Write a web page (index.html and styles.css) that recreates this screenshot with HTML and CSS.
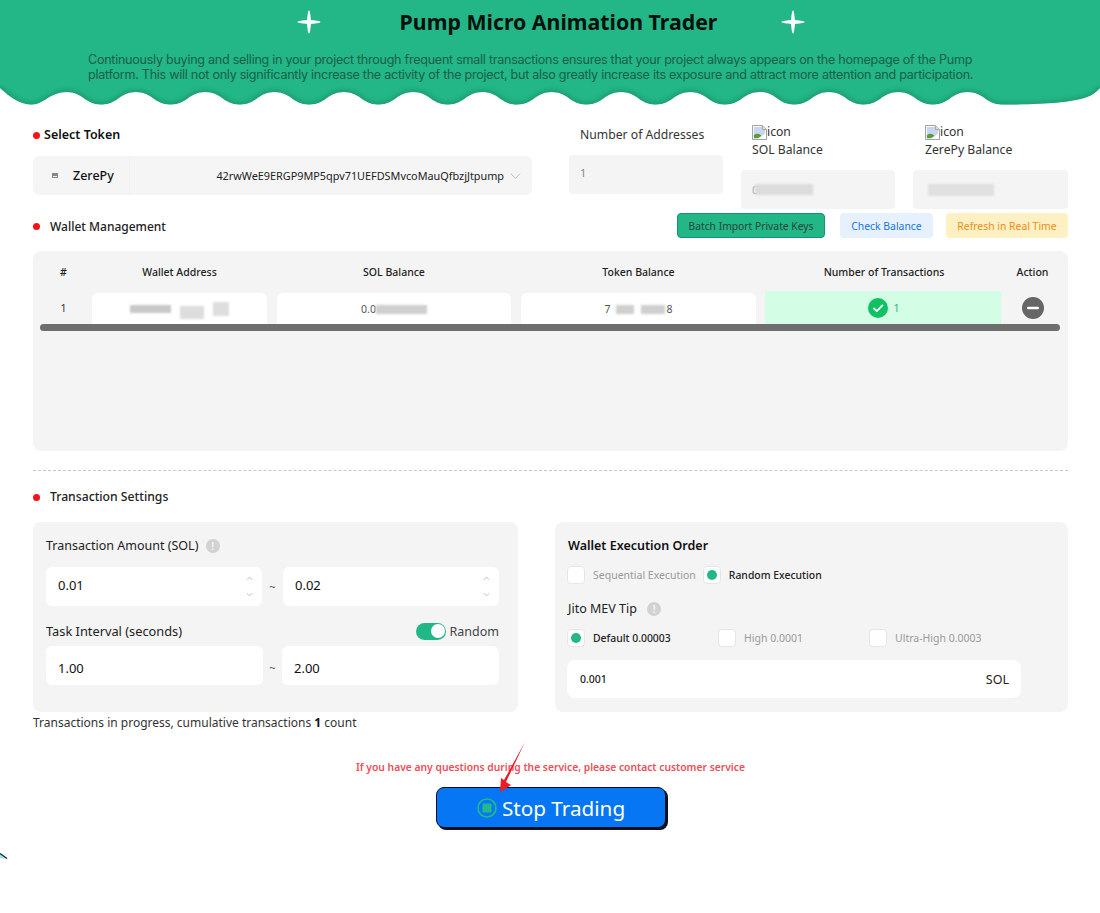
FILE: index.html
```html
<!DOCTYPE html>
<html lang="en">
<head>
<meta charset="utf-8">
<title>Pump Micro Animation Trader</title>
<link rel="stylesheet" href="styles.css">
</head>
<body>
<div class="page">
  <header class="hero">
    <div class="hero-title-row">
      <svg class="star" viewBox="0 0 24 24"><path d="M12 0.5C13.2 0.5 13.6 7 14 10C17 10.4 23.5 10.8 23.5 12C23.5 13.2 17 13.6 14 14C13.6 17 13.2 23.5 12 23.5C10.8 23.5 10.4 17 10 14C7 13.6 0.5 13.2 0.5 12C0.5 10.8 7 10.4 10 10C10.4 7 10.8 0.5 12 0.5Z"/></svg>
      <h1 class="hero-title">Pump Micro Animation Trader</h1>
      <svg class="star" viewBox="0 0 24 24"><path d="M12 0.5C13.2 0.5 13.6 7 14 10C17 10.4 23.5 10.8 23.5 12C23.5 13.2 17 13.6 14 14C13.6 17 13.2 23.5 12 23.5C10.8 23.5 10.4 17 10 14C7 13.6 0.5 13.2 0.5 12C0.5 10.8 7 10.4 10 10C10.4 7 10.8 0.5 12 0.5Z"/></svg>
    </div>
    <p class="hero-desc">Continuously buying and selling in your project through frequent small transactions ensures that your project always appears on the homepage of the Pump platform. This will not only significantly increase the activity of the project, but also greatly increase its exposure and attract more attention and participation.</p>
  </header>
  <svg class="wave" viewBox="0 0 1100 24" width="1100" height="24">
    <defs>
      <path id="wavePath" d="M-10 -10V3H0C10 12 20 19.5 32 19.5s17.6 -12.5 34.65 -12.5s17.6 12.5 34.65 12.5s17.6 -12.5 34.65 -12.5s17.6 12.5 34.65 12.5s17.6 -12.5 34.65 -12.5s17.6 12.5 34.65 12.5s17.6 -12.5 34.65 -12.5s17.6 12.5 34.65 12.5s17.6 -12.5 34.65 -12.5s17.6 12.5 34.65 12.5s17.6 -12.5 34.65 -12.5s17.6 12.5 34.65 12.5s17.6 -12.5 34.65 -12.5s17.6 12.5 34.65 12.5s17.6 -12.5 34.65 -12.5s17.6 12.5 34.65 12.5s17.6 -12.5 34.65 -12.5s17.6 12.5 34.65 12.5s17.6 -12.5 34.65 -12.5s17.6 12.5 34.65 12.5s17.6 -12.5 34.65 -12.5s17.6 12.5 34.65 12.5s17.6 -12.5 34.65 -12.5s17.6 12.5 34.65 12.5s17.6 -12.5 34.65 -12.5s17.6 12.5 34.65 12.5s17.6 -12.5 34.65 -12.5s17.6 12.5 34.65 12.5C1082 19.5 1092 12 1100 3H1110V-10Z"/>
      <clipPath id="waveClip"><use href="#wavePath"/></clipPath>
      <filter id="waveBlur" x="-5%" y="-50%" width="110%" height="200%"><feGaussianBlur stdDeviation="2"/></filter>
    </defs>
    <use href="#wavePath" fill="#23b686"/>
    <g clip-path="url(#waveClip)"><use href="#wavePath" fill="none" stroke="#1a9770" stroke-width="4" filter="url(#waveBlur)"/></g>
  </svg>

  <main class="content">
    <section class="token-row">
      <div class="token-col">
        <div class="label-bold dot-label"><span class="dot"></span>Select Token</div>
        <div class="token-select">
          <span class="token-icon"></span>
          <span class="token-name">ZerePy</span>
          <span class="token-sep"></span>
          <span class="token-addr">42rwWeE9ERGP9MP5qpv71UEFDSMvcoMauQfbzjJtpump</span>
          <svg class="token-chevron" viewBox="0 0 12 8"><path d="M1 1.5L6 6.5L11 1.5"/></svg>
        </div>
      </div>
      <div class="addr-col">
        <div class="addr-label">Number of Addresses</div>
        <div class="stat-box addr-box">1</div>
      </div>
      <div class="bal-col">
        <div class="bal-head">
          <div class="broken"><svg class="broken-img" viewBox="0 0 16 16"><path d="M0.5 0.5H11L15.5 5V15.5H0.5Z" fill="#fff" stroke="#9a9a9a"/><path d="M2 2H10.5V5.5H14V9L9 13H2Z" fill="#c6d6f2"/><path d="M2 14V11C5 8.5 8 9 10 11.5L6.5 14Z" fill="#5a9a3a"/><path d="M11 0.5V5H15.5" fill="#ddd" stroke="#9a9a9a"/></svg><span>icon</span></div>
          <div>SOL Balance</div>
        </div>
        <div class="stat-box bal-box"><span class="bal-val">0.</span><span class="redact r-sol"></span></div>
      </div>
      <div class="bal-col">
        <div class="bal-head">
          <div class="broken"><svg class="broken-img" viewBox="0 0 16 16"><path d="M0.5 0.5H11L15.5 5V15.5H0.5Z" fill="#fff" stroke="#9a9a9a"/><path d="M2 2H10.5V5.5H14V9L9 13H2Z" fill="#c6d6f2"/><path d="M2 14V11C5 8.5 8 9 10 11.5L6.5 14Z" fill="#5a9a3a"/><path d="M11 0.5V5H15.5" fill="#ddd" stroke="#9a9a9a"/></svg><span>icon</span></div>
          <div>ZerePy Balance</div>
        </div>
        <div class="stat-box bal-box"><span class="redact r-zere"></span></div>
      </div>
    </section>

    <section class="wallet-bar">
      <div class="section-title wallet-title"><span class="dot"></span>Wallet Management</div>
      <div class="wallet-actions">
        <button class="btn btn-green">Batch Import Private Keys</button>
        <button class="btn btn-blue">Check Balance</button>
        <button class="btn btn-yellow">Refresh in Real Time</button>
      </div>
    </section>

    <section class="table-panel">
      <div class="table-grid table-head">
        <div class="c-num">#</div>
        <div>Wallet Address</div>
        <div>SOL Balance</div>
        <div>Token Balance</div>
        <div>Number of Transactions</div>
        <div class="c-act">Action</div>
      </div>
      <div class="table-grid table-row">
        <div class="c-num">1</div>
        <div class="cell"><span class="redact r-a1"></span><span class="redact r-a2"></span><span class="redact r-a3"></span></div>
        <div class="cell">0.0<span class="redact r-b1"></span></div>
        <div class="cell">7<span class="redact r-c1"></span><span class="redact r-c2"></span>8</div>
        <div class="cell-green">
          <svg class="check" viewBox="0 0 20 20"><circle cx="10" cy="10" r="10" fill="#10c163"/><path d="M5.8 10.4L8.8 13.2L14.4 7.4" fill="none" stroke="#fff" stroke-width="1.8" stroke-linecap="round" stroke-linejoin="round"/></svg>
          <span class="tx-count">1</span>
        </div>
        <div class="c-act">
          <svg class="remove" viewBox="0 0 22 22"><circle cx="11" cy="11" r="11" fill="#666"/><rect x="5" y="9.7" width="12" height="2.6" rx="1.3" fill="#fff"/></svg>
        </div>
      </div>
      <div class="scrollbar"></div>
    </section>

    <hr class="divider">

    <div class="section-title settings-title"><span class="dot"></span>Transaction Settings</div>

    <section class="settings">
      <div class="panel panel-left">
        <div class="field-label">Transaction Amount (SOL) <span class="info">!</span></div>
        <div class="range">
          <div class="num-input"><span class="num-val">0.01</span><span class="spin"><svg viewBox="0 0 8 5"><path d="M1 4L4 1L7 4"/></svg><svg viewBox="0 0 8 5"><path d="M1 1L4 4L7 1"/></svg></span></div>
          <span class="tilde">~</span>
          <div class="num-input"><span class="num-val">0.02</span><span class="spin"><svg viewBox="0 0 8 5"><path d="M1 4L4 1L7 4"/></svg><svg viewBox="0 0 8 5"><path d="M1 1L4 4L7 1"/></svg></span></div>
        </div>
        <div class="interval-head">
          <div class="field-label-plain">Task Interval (seconds)</div>
          <div class="random"><span class="toggle"><span class="knob"></span></span><span class="random-text">Random</span></div>
        </div>
        <div class="range range-wide">
          <div class="num-input">1.00</div>
          <span class="tilde">~</span>
          <div class="num-input">2.00</div>
        </div>
      </div>
      <div class="panel panel-right">
        <div class="panel-title">Wallet Execution Order</div>
        <div class="options">
          <div class="opt opt-off"><span class="box"></span>Sequential Execution</div>
          <div class="opt opt-on"><span class="box"><span class="pip"></span></span>Random Execution</div>
        </div>
        <div class="field-label jito">Jito MEV Tip <span class="info">!</span></div>
        <div class="tips">
          <div class="opt opt-on tip"><span class="box"><span class="pip"></span></span>Default 0.00003</div>
          <div class="opt opt-off tip"><span class="box"></span>High 0.0001</div>
          <div class="opt opt-off tip"><span class="box"></span>Ultra-High 0.0003</div>
        </div>
        <div class="sol-input"><span>0.001</span><span class="sol-unit">SOL</span></div>
      </div>
    </section>

    <p class="progress">Transactions in progress, cumulative transactions <b>1</b> count</p>
    <p class="contact">If you have any questions during the service, please contact customer service</p>

    <div class="cta-wrap">
      <div class="cta">
        <button class="stop-btn">
          <svg class="stop-icon" viewBox="0 0 20 20"><circle cx="10" cy="10" r="9" fill="none" stroke="#22b98a" stroke-width="1.7"/><rect x="5.5" y="5.5" width="9" height="9" rx="1.2" fill="#22b98a"/></svg>
          Stop Trading
        </button>
        <svg class="arrow" viewBox="0 0 28 53"><path d="M27 1L8 41L13 44L2 51L3 37L6 39Z"/></svg>
      </div>
    </div>
  </main>
  <svg class="corner" viewBox="0 0 8 6"><path d="M0 0L7 5.5H0Z" fill="#9fe3ea"/><path d="M0 0.5L7 5.5" stroke="#123" stroke-width="1.2" fill="none"/></svg>
</div>
</body>
</html>
```

FILE: styles.css
```css
* { box-sizing: border-box; }
html, body { margin: 0; padding: 0; background: #fff; }
body { font-family: "Noto Sans", "Liberation Sans", sans-serif; color: #222; font-size: 13px; }
.page { position: relative; width: 1100px; height: 913px; overflow: hidden; }

.hero { background: #23b686; height: 85px; padding-top: 8px; display: flex; flex-direction: column; align-items: center; }
.hero-title-row { display: flex; align-items: center; height: 28px; margin-left: 2px; }
.star { width: 24px; height: 24px; fill: #fff; }
.hero-title { margin: 0 64px 0 79px; font-size: 21.3px; line-height: 28px; font-weight: 700; color: #06110d; white-space: nowrap; }
.hero-desc { margin: 17px 0 0 88px; align-self: flex-start; width: 900px; font-family: Inter, "Liberation Sans", sans-serif; font-size: 12.6px; letter-spacing: -0.28px; line-height: 14.5px; color: #17604a; }
.wave { display: block; margin-bottom: -4px; }

.content { padding: 18px 32px 0 33px; position: relative; }
.token-row { display: flex; align-items: flex-start; height: 86px; }
.token-col { width: 499px; margin-right: 37px; padding-top: 3px; }
.dot-label { display: flex; align-items: center; line-height: 18px; margin-bottom: 12px; }
.label-bold { font-weight: 600; font-size: 12.5px; color: #111; }
.dot { width: 7px; height: 7px; border-radius: 50%; background: #f5121b; margin-right: 4px; flex: none; }
.token-select { display: flex; align-items: center; height: 39px; background: #f5f5f5; border-radius: 6px; }
.token-icon { width: 6px; height: 5px; border: 1px solid #888; background: linear-gradient(#888 0 2px, #eee 2px); margin-left: 19px; }
.token-name { margin-left: 15px; width: 56px; font-weight: 500; font-size: 12.5px; color: #111; }
.token-sep { width: 1px; height: 39px; background: #efefef; }
.token-addr { flex: 1; text-align: right; font-size: 10.85px; color: #222; white-space: nowrap; }
.token-chevron { width: 11px; height: 8px; margin: 0 11px 0 6px; fill: none; stroke: #b8b8b8; stroke-width: 1; }

.addr-col { width: 154px; margin-right: 18px; padding-top: 3px; }
.addr-label { line-height: 18px; margin: 0 0 11px 11px; font-size: 12.2px; white-space: nowrap; color: #333; }
.stat-box { background: #f4f4f4; border-radius: 4px; height: 39px; }
.addr-box { padding: 10px 0 0 11px; font-size: 11px; color: #888; }
.bal-col { width: 154px; margin-right: 18px; }
.bal-col:last-child { width: 155px; margin-right: 0; }
.bal-col:last-child .bal-head { padding-left: 12px; }
.bal-head { padding-left: 11px; font-size: 12.2px; line-height: 18px; color: #333; height: 47px; }
.broken { display: flex; align-items: center; height: 18px; }
.broken-img { width: 15px; height: 15px; margin-right: 0; flex: none; }
.bal-box { display: flex; align-items: center; padding-left: 11px; font-size: 11px; color: #aaa; }
.redact { display: inline-block; background: #d4d4d4; filter: blur(1.2px); vertical-align: middle; }
.r-sol { width: 58px; height: 11px; margin-left: -6px; background: #dcdcdc; }
.r-zere { width: 66px; height: 12px; margin-left: 4px; background: #e0e0e0; }

.wallet-bar { display: flex; justify-content: space-between; align-items: center; height: 25px; margin-top: 4px; }
.section-title { display: flex; align-items: center; font-size: 12.2px; font-weight: 500; line-height: 18px; color: #222; }
.wallet-title { font-size: 12px; padding-top: 2px; }
.section-title .dot { margin-right: 10px; }
.wallet-actions { display: flex; gap: 13px; }
.btn { height: 25px; padding: 0; font: inherit; font-size: 10.4px; border-radius: 4px; white-space: nowrap; }
.btn-green { width: 148px; background: #23b686; border: 1px solid #12956a; color: #24463a; margin-right: 2px; font-size: 10.3px; }
.btn-blue { width: 93px; background: #e6f1fd; border: 0; color: #1677e0; }
.btn-yellow { width: 122px; background: #fdf1c4; border: 0; color: #ee8c13; }

.table-panel { position: relative; height: 200px; margin-top: 13px; background: #f4f4f4; border-radius: 8px; padding-top: 12px; }
.table-grid { display: grid; grid-template-columns: 49px 175px 234px 235px 236px 1fr; column-gap: 10px; text-align: center; }
.table-head { font-size: 10.5px; font-weight: 500; line-height: 18px; color: #222; }
.c-num { padding-left: 12px; }
.c-act { padding-right: 15px; }
.table-row { height: 34px; margin-top: 10px; font-size: 10.5px; align-items: center; color: #333; }
.cell { height: 32px; margin-top: 2px; background: #fff; border-radius: 6px 6px 0 0; display: flex; align-items: center; justify-content: center; color: #555; }
.cell-green { height: 34px; margin: 0 1px 0 -1px; padding-left: 2px; background: #d3fde5; display: flex; align-items: center; justify-content: center; gap: 5px; }
.check { width: 20px; height: 20px; }
.tx-count { color: #2bb585; font-size: 10.5px; }
.remove { width: 22px; height: 22px; display: block; margin: 0 auto; }
.scrollbar { position: absolute; left: 7px; right: 8px; top: 73px; height: 7px; background: #6e6e6e; border-radius: 4px; }
.r-a1 { width: 41px; height: 8px; background: #c8c8c8; }
.r-a2 { width: 24px; height: 13px; margin-left: 9px; margin-top: 6px; background: #ddd; }
.r-a3 { width: 16px; height: 14px; margin-left: 9px; background: #dedede; }
.r-b1 { width: 51px; height: 9px; background: #cfcfcf; margin-left: 0; }
.r-c1 { width: 18px; height: 9px; margin-left: 5px; background: #cfcfcf; }
.r-c2 { width: 24px; height: 9px; margin-left: 7px; margin-right: 2px; background: #cfcfcf; }

.divider { border: 0; border-top: 1px dashed #c8c8c8; margin: 19px 0 0; }
.settings-title { margin-top: 17px; }
.settings { display: flex; justify-content: space-between; margin-top: 16px; }
.panel { height: 190px; background: #f4f4f4; border-radius: 8px; }
.panel-left { width: 485px; padding: 15px 19px 0 13px; }
.panel-left .field-label { gap: 4px; }
.panel-right { width: 513px; padding: 15px 0 0 12px; }
.field-label { display: flex; align-items: center; gap: 7px; font-size: 12.5px; line-height: 18px; color: #222; white-space: pre; }
.field-label-plain { font-size: 12.8px; line-height: 18px; color: #222; }
.info { display: inline-flex; align-items: center; justify-content: center; width: 14px; height: 14px; border-radius: 50%; background: #d2d2d2; color: #f4f4f4; font-size: 10px; font-weight: 700; }
.range { display: flex; align-items: center; margin-top: 12px; height: 39px; }
.num-input { flex: 1; height: 39px; background: #fff; border-radius: 6px; display: flex; align-items: center; justify-content: space-between; padding: 0 9px 0 12px; font-size: 13px; color: #111; }
.num-val { margin-bottom: 3px; }
.tilde { width: 21px; text-align: center; font-size: 11px; color: #555; }
.spin { display: flex; flex-direction: column; gap: 11px; }
.spin svg { display: block; width: 7px; height: 5px; fill: none; stroke: #b5b5b5; stroke-width: 1; }
.interval-head { display: flex; justify-content: space-between; align-items: center; margin-top: 16px; height: 18px; }
.random { display: flex; align-items: center; gap: 4px; }
.toggle { width: 30px; height: 17px; border-radius: 9px; background: #23b686; position: relative; display: block; }
.knob { position: absolute; right: 1px; top: 1.5px; width: 14px; height: 14px; border-radius: 50%; background: #fff; }
.random-text { font-size: 12.5px; color: #444; }
.range-wide { margin-top: 6px; }
.range-wide .num-input { padding-top: 4px; }
.range-wide .tilde { width: 19px; padding-top: 3px; }

.panel-title { margin-left: 1px; font-size: 12.5px; font-weight: 600; line-height: 18px; color: #111; }
.options { display: flex; margin-top: 11px; }
.opt { display: flex; align-items: center; font-size: 10.5px; line-height: 18px; white-space: nowrap; }
.box { width: 18px; height: 18px; background: #fff; border: 1px solid #e6e6e6; border-radius: 4px; margin-right: 8px; display: flex; align-items: center; justify-content: center; flex: none; }
.pip { width: 10px; height: 10px; border-radius: 50%; background: #23b686; }
.opt-off { color: #9a9a9a; }
.opt-on { color: #222; font-weight: 500; font-size: 10.4px; }
.options .opt-off { margin-right: 7px; }
.jito { margin-top: 16px; margin-left: 1px; }
.tips { display: flex; margin-top: 11px; }
.tip { width: 151px; }
.sol-input { display: flex; align-items: center; justify-content: space-between; width: 454px; height: 38px; margin-top: 13px; background: #fff; border-radius: 8px; padding: 0 12px 0 13px; font-size: 10.5px; font-weight: 500; color: #222; }
.sol-unit { font-size: 12.5px; font-weight: 400; }

.progress { margin: 2px 0 0; line-height: 18px; font-size: 12px; color: #333; }
.progress b { color: #111; }
.contact { margin: 27px 0 0; line-height: 16px; text-align: center; font-size: 10.3px; font-weight: 600; color: #ea5058; }
.cta-wrap { display: flex; justify-content: center; margin-top: 12px; }
.cta { position: relative; width: 230px; height: 41px; margin-left: 1px; }
.stop-btn { width: 230px; height: 41px; display: flex; align-items: center; justify-content: center; gap: 5px; background: #0676f5; color: #fff; border: 1.5px solid #0a0a2a; border-radius: 8px; box-shadow: 2px 2px 0 #111; font: inherit; font-size: 20.7px; padding: 0; }
.stop-icon { width: 20px; height: 20px; }
.arrow { position: absolute; left: 62px; top: -46px; width: 28px; height: 53px; fill: #ef1a24; }
.corner { position: absolute; left: 0; top: 853px; width: 8px; height: 6px; }
```
